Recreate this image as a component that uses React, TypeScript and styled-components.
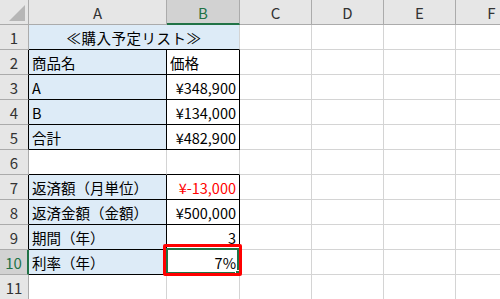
import styled, { createGlobalStyle } from "styled-components";

const GlobalStyle = createGlobalStyle`
  html, body {
    margin: 0;
    padding: 0;
    background: #ffffff;
    overflow: hidden;
  }
  body {
    font-family: "Noto Sans CJK JP", "Noto Sans", sans-serif;
  }
`;

const GRID = "#d4d4d4";
const HEAD_LINE = "#ababab";
const INK = "#000000";
const GREEN = "#217346";
const BLUE = "#ddebf7";

const COLUMNS = ["A", "B", "C", "D", "E", "F"];
const SELECTED_COL = 1;
const SELECTED_ROW = 10;

type Cell = { text?: string; align?: "left" | "right"; red?: boolean };

// only columns A and B carry content; row 1 is a merged title
const rows: Record<number, [Cell, Cell]> = {
  2: [{ text: "商品名" }, { text: "価格" }],
  3: [{ text: "A" }, { text: "¥348,900", align: "right" }],
  4: [{ text: "B" }, { text: "¥134,000", align: "right" }],
  5: [{ text: "合計" }, { text: "¥482,900", align: "right" }],
  7: [{ text: "返済額（月単位）" }, { text: "¥-13,000", align: "right", red: true }],
  8: [{ text: "返済金額（金額）" }, { text: "¥500,000", align: "right" }],
  9: [{ text: "期間（年）" }, { text: "3", align: "right" }],
  10: [{ text: "利率（年）" }, { text: "7%", align: "right" }],
};

const boxed = (r: number, c: number) =>
  c >= 0 && c <= 1 && ((r >= 2 && r <= 5) || (r >= 7 && r <= 10));

const Sheet = styled.div`
  display: grid;
  grid-template-columns: 29px 138px 73px 72px 72px 72px 72px;
  grid-template-rows: 25px repeat(11, 25px);
  width: 500px;
  height: 299px;
  overflow: hidden;
  font-size: 14.5px;
  color: ${INK};
`;

const Corner = styled.div`
  display: flex;
  align-items: flex-end;
  justify-content: flex-end;
  padding: 3px;
  background: #e6e6e6;
  border-right: 1px solid ${HEAD_LINE};
  border-bottom: 1px solid ${HEAD_LINE};
  box-sizing: border-box;
`;

const CornerMark = styled.div`
  width: 0;
  height: 0;
  border-left: 16px solid transparent;
  border-bottom: 16px solid #b6b6b6;
`;

const ColHead = styled.div<{ $active?: boolean }>`
  display: flex;
  align-items: center;
  justify-content: center;
  box-sizing: border-box;
  background: ${(p) => (p.$active ? "#d2d2d2" : "#e6e6e6")};
  color: ${(p) => (p.$active ? GREEN : "#333333")};
  border-right: 1px solid ${HEAD_LINE};
  border-bottom: ${(p) => (p.$active ? `2px solid ${GREEN}` : `1px solid ${HEAD_LINE}`)};
  font-size: 15px;
  padding-top: ${(p) => (p.$active ? "1px" : "0")};
`;

const RowHead = styled.div<{ $active?: boolean; $edge: string }>`
  display: flex;
  align-items: center;
  justify-content: center;
  box-sizing: border-box;
  background: ${(p) => (p.$active ? "#d2d2d2" : "#e6e6e6")};
  color: ${(p) => (p.$active ? GREEN : "#333333")};
  border-right: ${(p) => (p.$active ? `2px solid ${GREEN}` : `1px solid ${p.$edge}`)};
  border-bottom: 1px solid ${HEAD_LINE};
  font-size: 15px;
`;

const GridCell = styled.div<{
  $fill?: string;
  $right: string;
  $bottom: string;
  $align?: "left" | "right";
  $red?: boolean;
  $span?: number;
}>`
  position: relative;
  display: flex;
  align-items: center;
  box-sizing: border-box;
  grid-column: span ${(p) => p.$span ?? 1};
  justify-content: ${(p) => (p.$align === "right" ? "flex-end" : "flex-start")};
  padding: 1px 3px 0 3px;
  background: ${(p) => p.$fill ?? "#ffffff"};
  border-right: 1px solid ${(p) => p.$right};
  border-bottom: 1px solid ${(p) => p.$bottom};
  color: ${(p) => (p.$red ? "#ff0000" : INK)};
  white-space: nowrap;
`;

const Title = styled(GridCell)`
  justify-content: center;
  letter-spacing: 0.5px;
`;

// active-cell frame drawn over the cell borders
const Selection = styled.div`
  position: absolute;
  inset: -2px 0 0 -1px;
  border: 2px solid ${GREEN};
  pointer-events: none;
`;

const FillHandle = styled.div`
  position: absolute;
  right: -4px;
  bottom: -4px;
  width: 6px;
  height: 6px;
  box-sizing: border-box;
  background: ${GREEN};
  border: 1px solid #ffffff;
`;

// red call-out frame around the active cell
const Highlight = styled.div`
  position: absolute;
  inset: -6px -3px -2px -4px;
  border: 3px solid #ff0000;
  border-radius: 2px;
  pointer-events: none;
  z-index: 2;
`;

function Row({ r }: { r: number }) {
  const edge = boxed(r, 0) ? INK : HEAD_LINE;
  const cells = [];

  if (r === 1) {
    cells.push(
      <Title key="t" $span={2} $fill={BLUE} $right={GRID} $bottom={INK}>
        ≪購入予定リスト≫
      </Title>
    );
  }

  const start = r === 1 ? 2 : 0;
  for (let c = start; c < COLUMNS.length; c++) {
    const data = rows[r]?.[c as 0 | 1];
    const right = boxed(r, c) || boxed(r, c + 1) ? INK : GRID;
    const bottom = boxed(r, c) || boxed(r + 1, c) || (r === 1 && c <= 1) ? INK : GRID;
    const active = r === SELECTED_ROW && c === SELECTED_COL;
    cells.push(
      <GridCell
        key={c}
        $fill={c === 0 && r !== 6 && r !== 11 ? BLUE : undefined}
        $right={right}
        $bottom={bottom}
        $align={data?.align}
        $red={data?.red}
      >
        {data?.text}
        {active && (
          <>
            <Selection>
              <FillHandle />
            </Selection>
            <Highlight />
          </>
        )}
      </GridCell>
    );
  }

  return (
    <>
      <RowHead $active={r === SELECTED_ROW} $edge={edge}>
        {r}
      </RowHead>
      {cells}
    </>
  );
}

export default function App() {
  return (
    <>
      <GlobalStyle />
      <Sheet>
        <Corner>
          <CornerMark />
        </Corner>
        {COLUMNS.map((c, i) => (
          <ColHead key={c} $active={i === SELECTED_COL}>
            {c}
          </ColHead>
        ))}
        {Array.from({ length: 11 }, (_, i) => (
          <Row key={i + 1} r={i + 1} />
        ))}
      </Sheet>
    </>
  );
}
